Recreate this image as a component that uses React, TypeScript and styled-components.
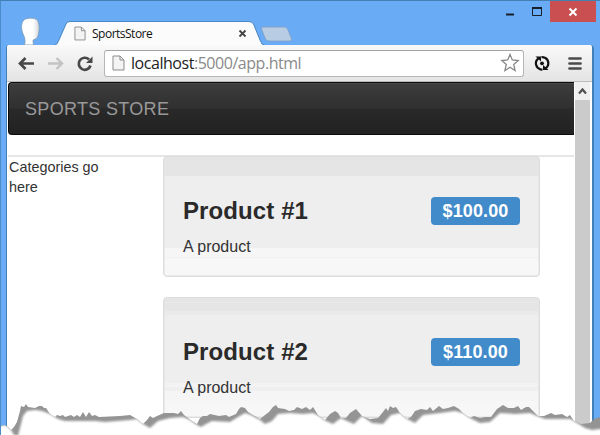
import React from "react";
import styled, { createGlobalStyle } from "styled-components";

const GlobalStyle = createGlobalStyle`
  * { box-sizing: border-box; }
  body { margin: 0; overflow: hidden; background: #fff; }
`;

const Window = styled.div`
  position: relative;
  width: 600px;
  height: 435px;
  display: flex;
  flex-direction: column;
  overflow: hidden;
  background: #69abf5;
  border-top: 1px solid #4280b4;
  border-left: 1px solid #4a8bc9;
  font-family: "Liberation Sans", Arial, sans-serif;
  color: #333;
`;

const TitleBar = styled.div`
  height: 44px;
  display: flex;
  align-items: flex-start;
  flex: none;
`;

const TabArt = styled.svg`
  display: block;
  flex: none;
`;

const TabTitle = styled.div`
  position: absolute;
  left: 91px;
  top: 24px;
  font: 12px/18px "Open Sans", "Noto Sans", sans-serif;
  letter-spacing: -0.5px;
  color: #111;
`;

const Controls = styled.div`
  margin-left: auto;
  margin-right: 4px;
  display: flex;
`;

const Control = styled.div<{ $close?: boolean; $width: number }>`
  width: ${(p) => p.$width}px;
  height: 21px;
  background: ${(p) => (p.$close ? "#c94f50" : "transparent")};
`;

const Frame = styled.div`
  flex: 1;
  min-height: 0;
  margin: 0 6px 0 5px;
  border: solid #4180b8;
  border-width: 0 2px 0 1px;
  border-radius: 3px 4px 0 0;
  background: #fff;
  display: flex;
  flex-direction: column;
  overflow: hidden;
`;

const Toolbar = styled.div`
  height: 37px;
  flex: none;
  display: flex;
  align-items: center;
  background: linear-gradient(#f9f9f9, #e4e4e4);
  border-bottom: 1px solid #bcbcbc;
`;

const ToolIcon = styled.svg`
  display: block;
  flex: none;
`;

const Address = styled.div`
  width: 420px;
  height: 27px;
  display: flex;
  align-items: center;
  background: #fff;
  border: 1px solid #b6b6b6;
  border-top-color: #a4a4a4;
  border-radius: 3px;
`;

const Url = styled.div`
  flex: 1;
  margin-left: 6px;
  white-space: nowrap;
  font: 16px/24px "Open Sans", "Noto Sans", sans-serif;
  letter-spacing: -0.46px;
  color: #8a8a8a;
  b { font-weight: 400; color: #222; }
`;

const Viewport = styled.div`
  flex: 1;
  min-height: 0;
  display: flex;
`;

const Page = styled.div`
  width: 567px;
  padding-left: 1px;
  overflow: hidden;
`;

const NavBar = styled.div`
  height: 53px;
  padding-left: 16px;
  border: solid #0b0b0b;
  border-width: 1px 0 1px 1px;
  border-radius: 4px 0 0 4px;
  background: linear-gradient(#3d3d3d, #303030 48%, #292929 52%, #222);
  box-shadow: inset 0 1px #484848;
  font-size: 18px;
  letter-spacing: 0.32px;
  line-height: 52px;
  color: #999;
`;

const Divider = styled.div`
  height: 2px;
  margin-top: 20px;
  background: #e6e6e6;
`;

const Columns = styled.div`
  display: flex;
  margin-left: 1px;
  margin-top: -1px;
`;

const Categories = styled.div`
  width: 154px;
  padding: 1px 40px 0 0;
  font-size: 14.4px;
  line-height: 20px;
`;

const Products = styled.div`
  width: 377px;
  display: flex;
  flex-direction: column;
  gap: 20px;
`;

const Well = styled.div<{ $banded?: boolean }>`
  height: 121px;
  padding: 40px 19px 0 19px;
  border: 1px solid #dcdcdc;
  border-radius: 4px;
  background: ${(p) =>
    p.$banded
      ? "linear-gradient(#e5e5e5 0 4px, #e9e9e9 4px 5px, #e5e5e5 5px 13px, #eaeaea 13px 17px, #eee 17px 85px, #f3f3f3 85px 89px, #efefef 89px 93px, #f5f5f5 93px 103px, #f7f7f7 103px)"
      : "linear-gradient(#e5e5e5 0 19px, #eee 19px 91px, #f6f6f6 91px 100px, #f1f1f1 100px 101px, #f7f7f7 101px)"};
  box-shadow: inset 0 0 0 1px rgba(230, 230, 230, 0.7);
`;

const ProductHead = styled.div`
  display: flex;
  justify-content: space-between;
  height: 28px;
`;

const ProductName = styled.div`
  font-size: 24px;
  font-weight: 700;
  letter-spacing: 0.1px;
  line-height: 28px;
  color: #2a2a2a;
`;

const Price = styled.div`
  width: 89px;
  height: 28px;
  border-radius: 4px;
  background: #428bca;
  color: #fff;
  font-size: 18px;
  font-weight: 700;
  letter-spacing: 0.1px;
  line-height: 28px;
  text-align: center;
`;

const Description = styled.div`
  padding-top: 11px;
  font-size: 16px;
  line-height: 22px;
`;

const ScrollBar = styled.div`
  width: 15px;
  margin-left: 1px;
  display: flex;
  flex-direction: column;
  background: #cbcbcb;
`;

const ScrollButton = styled.div`
  height: 18px;
  background: #f0f0f0;
`;

const TornPaper = styled.svg`
  position: absolute;
  left: -1px;
  top: -1px;
  pointer-events: none;
`;

const products = [
  { name: "Product #1", price: "$100.00" },
  { name: "Product #2", price: "$110.00" },
];

const tearTop =
  "0,426 5,425 8,427 11,430 14,427 17,422 20,411 21,406 24,407 26,404 28,407 35,408 39,406 42,406 44,408 46,408 50,414 55,417 57,415 60,416 63,415 65,417 71,415 74,417 77,415 80,417 83,412 86,417 89,412 92,416 95,415 99,417 120,416 130,415 137,419 143,424 147,420 150,416 153,418 157,416 164,413 174,413 178,414 181,411 184,415 192,421 197,424 200,418 203,416 207,416 210,414 219,416 226,415 229,417 236,414 239,409 241,407 245,408 248,412 260,419 265,415 269,412 273,407 276,405 278,408 285,409 289,411 294,410 297,407 302,409 306,407 310,410 313,407 318,415 325,420 330,414 335,411 338,413 341,418 346,418 350,413 356,409 362,416 370,419 378,418 383,412 386,408 388,411 390,406 393,408 396,407 400,413 407,419 411,417 415,411 421,409 427,410 430,407 433,411 439,406 443,409 448,408 454,406 459,409 463,413 470,418 474,416 480,418 485,417 491,417 497,409 503,405 508,408 514,408 518,406 521,410 526,407 529,407 533,411 538,416 544,416 551,413 555,415 562,414 567,417 570,415 574,421 581,424 590,423 594,419 600,417";

const tearBottom =
  "0,426 5,425 8,427 11,430 14,435 18,436 20,428 23,416 27,411 35,410 42,411 50,414 58,419 65,421 95,421 105,422 130,420 137,419 143,424 150,428 158,421 170,418 183,417 190,420 197,425 201,427 206,424 212,421 230,422 238,417 245,413 251,415 260,420 265,424 272,421 278,414 290,413 303,414 313,413 319,416 326,421 333,424 341,418 347,421 354,424 362,416 372,423 383,424 391,415 400,413 407,419 415,423 423,415 440,413 455,411 463,413 470,418 480,423 490,422 500,413 515,414 530,413 537,416 545,419 570,419 574,421 585,428 592,430 600,429";

function PageIcon({ size }: { size: "small" | "large" }) {
  return (
    <ToolIcon width={size === "small" ? 12 : 13} height={size === "small" ? 15 : 16} viewBox="0 0 13 16">
      <path d="M1 1H8L12 5V15H1Z" fill="#f4f4f4" stroke="#8b8b8b" />
      <path d="M8 1V5H12" fill="none" stroke="#8b8b8b" />
    </ToolIcon>
  );
}

const TabIcon = styled.div`
  position: absolute;
  left: 73px;
  top: 25px;
`;

const IconSlot = styled.div<{ $left: number }>`
  margin-left: ${(p) => p.$left}px;
`;

function TitleArea() {
  return (
    <TitleBar>
      <TabArt width="300" height="45" viewBox="1 1 300 45">
        <defs>
          <linearGradient id="person" x1="0" x2="1">
            <stop offset="0" stopColor="#fff" />
            <stop offset=".65" stopColor="#fff" />
            <stop offset="1" stopColor="#d4d8dc" />
          </linearGradient>
        </defs>
        <path d="M24.500 45C25.500 41 25 38 23.500 35C21 30 21 24 23 21C25 17.500 35 17 37.500 20.500C40 24 39.500 33 37.500 37C36.500 40 33 38.500 33 41L33.500 45Z" fill="url(#person)" stroke="#7d9db9" strokeWidth=".9" />
        <path d="M6 47V48Q6 45.500 9 45.500H54Q57 45 58.500 41L66 24Q67 21.500 70 21.500H249Q252 21.500 253.500 24L260 40Q262 45.500 265 45.500H301V47Z" fill="#fbfbfb" stroke="#4788c3" />
        <path d="M263 27H284Q287 27 288 30L291.500 39Q292 41 289 41H269Q266 41 265 38L261.500 29Q261 27 263 27Z" fill="#b8cce4" stroke="#809fc3" strokeWidth=".8" />
        <path d="M239.500 30.500L245.500 36.500M245.500 30.500L239.500 36.500" stroke="#444" strokeWidth="1.800" />
      </TabArt>
      <TabIcon><PageIcon size="small" /></TabIcon>
      <TabTitle>SportsStore</TabTitle>
      <Controls>
        <Control $width={26}>
          <ToolIcon width="26" height="21"><path d="M2 13.500H10" stroke="#171f28" strokeWidth="2" /></ToolIcon>
        </Control>
        <Control $width={20}>
          <ToolIcon width="20" height="21"><path d="M2.500 7V14.500H11.500V7Z" fill="none" stroke="#171f28" /><path d="M2 7H12" stroke="#171f28" strokeWidth="2" /></ToolIcon>
        </Control>
        <Control $width={46} $close>
          <ToolIcon width="46" height="21"><path d="M19.500 7.500L26.500 14.500M26.500 7.500L19.500 14.500" stroke="#fff" strokeWidth="2" /></ToolIcon>
        </Control>
      </Controls>
    </TitleBar>
  );
}

export default function App() {
  return (
    <>
      <GlobalStyle />
      <Window>
        <TitleArea />
        <Frame>
          <Toolbar>
            <ToolIcon width="97" height="37" viewBox="7 45 97 37">
              <path d="M20 63.500H34M25.500 58L20 63.500L25.500 69" fill="none" stroke="#484848" strokeWidth="2.700" />
              <path d="M48 63.500H61M56.500 58L62 63.500L56.500 69" fill="none" stroke="#c3c3c3" strokeWidth="2.400" />
              <path d="M89 59.500A6 6 0 1 0 90.500 65.500" fill="none" stroke="#484848" strokeWidth="2.700" />
              <path d="M92.500 56.500V63H86Z" fill="#484848" />
            </ToolIcon>
            <Address>
              <IconSlot $left={7}><PageIcon size="large" /></IconSlot>
              <Url><b>localhost</b>:5000/app.html</Url>
              <ToolIcon width="24" height="24" viewBox="0 0 24 24">
                <path d="M11 3.500L13.300 9L19.200 9.500L14.700 13.400L16.100 19.500L11 16.300L5.900 19.500L7.300 13.400L2.800 9.500L8.700 9Z" fill="#fff" stroke="#898989" strokeWidth="1.300" />
              </ToolIcon>
            </Address>
            <ToolIcon width="67" height="37" viewBox="524 45 67 37">
              <path d="M538.500 58.300A6.100 6.100 0 0 0 540.500 69.200M545 57.700A6.100 6.100 0 0 1 545.500 68.300M541.500 57.200Q543 57 545 57.700M538.500 68.300Q540 69.800 542.500 69.500" fill="none" stroke="#111" strokeWidth="2.200" />
              <path d="M535.500 56.500H541V61.500ZM548.500 70H543V65Z" fill="#111" />
              <circle cx="542" cy="63.300" r="1.900" fill="#111" />
              <path d="M569.500 58.500H580.500M569.500 63.500H580.500M569.500 68.500H580.500" stroke="#4b4b4b" strokeWidth="2.700" strokeLinecap="round" />
            </ToolIcon>
          </Toolbar>
          <Viewport>
            <Page>
              <NavBar>SPORTS STORE</NavBar>
              <Divider />
              <Columns>
                <Categories>Categories go here</Categories>
                <Products>
                  {products.map((p, i) => (
                    <Well key={p.name} $banded={i === 1}>
                      <ProductHead>
                        <ProductName>{p.name}</ProductName>
                        <Price>{p.price}</Price>
                      </ProductHead>
                      <Description>A product</Description>
                    </Well>
                  ))}
                </Products>
              </Columns>
            </Page>
            <ScrollBar>
              <ScrollButton>
                <ToolIcon width="15" height="18"><path d="M4 11.500L7.500 7.500L11 11.500" fill="none" stroke="#505050" strokeWidth="2.200" /></ToolIcon>
              </ScrollButton>
            </ScrollBar>
          </Viewport>
        </Frame>
        <TornPaper width="600" height="435" viewBox="0 0 600 435">
          <defs>
            <filter id="soft" x="-5%" y="-20%" width="110%" height="140%"><feGaussianBlur stdDeviation="1" /></filter>
            <clipPath id="paper"><polygon points={`${tearTop} 600,436 0,436`} /></clipPath>
          </defs>
          <polygon points={`${tearTop} 600,436 0,436`} fill="#949494" />
          <g clipPath="url(#paper)">
            <polygon points={`-10,426 ${tearBottom} 610,429 610,450 -10,450`} fill="#fff" filter="url(#soft)" />
          </g>
        </TornPaper>
      </Window>
    </>
  );
}
